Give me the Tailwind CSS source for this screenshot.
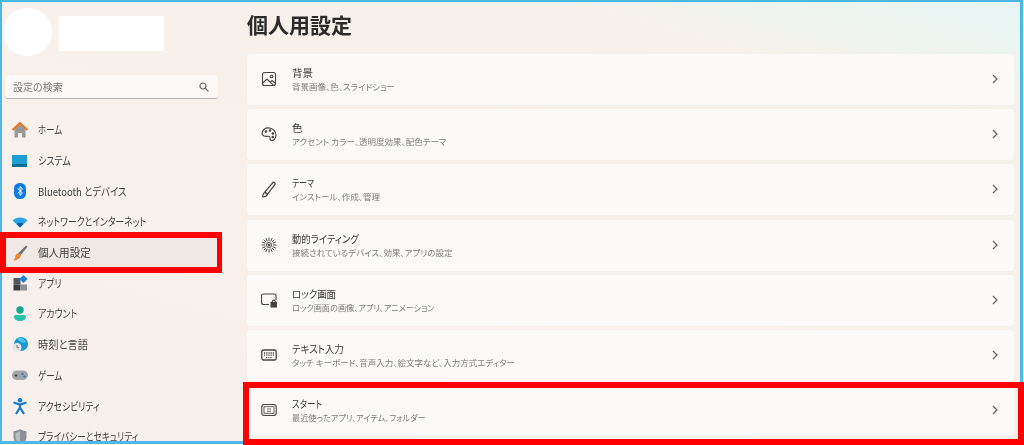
<!DOCTYPE html>
<html lang="ja">
<head>
    <meta charset="UTF-8">
    <title>個人用設定</title>
    <script src="https://cdn.jsdelivr.net/npm/@tailwindcss/browser@4"></script>
</head>
<body class="bg-white">
<div class="relative w-[1024px] h-[445px] overflow-hidden bg-white font-['Noto_Sans_CJK_JP','Noto_Sans',sans-serif] [font-feature-settings:'palt']">
    <!-- window -->
    <div class="flex w-[1023px] h-[444px] overflow-hidden border-[3px] border-t-2 border-l-2 border-[#4db8e8] bg-linear-[195deg] from-[#e5f7f5] via-[#f7f1eb] via-[18%] to-[#f8f0ed] text-[#333]">

        <!-- sidebar -->
        <aside class="w-[245px] shrink-0 pl-[3px] blur-[0.45px]">
            <div class="flex items-center gap-[7px] pt-[6px]">
                <div class="w-[49px] h-[48px] -ml-[2px] rounded-full bg-white"></div>
                <div class="w-[105px] h-[35px] mt-[2px] bg-white"></div>
            </div>
            <div class="flex items-center justify-between w-[213px] h-[24px] mt-[19px] pl-[8px] pr-[9px] rounded-[3px] bg-[#fbf8f6] border-b border-[#b5b2b0] shadow-[0_0_1px_#ddd] text-[10px] text-[#777]">
                <span>設定の検索</span>
                <svg class="w-[10px] h-[10px]" viewBox="0 0 10 10" fill="none" stroke="#666" stroke-width="1.2"><circle cx="4" cy="4" r="3"/><path d="M6.2 6.2 9.4 9.4"/></svg>
            </div>

            <nav class="mt-[15.5px] text-[11px] leading-none text-[#3d3d3d]">
                <div class="flex items-center h-[30.7px] pl-[6px] gap-[9px]">
                    <svg class="w-[18px] h-[18px] shrink-0" viewBox="0 0 18 18"><path d="M3.5 8 9 3l5.500 5v8.500h-3.500v-4.500H7v4.500H3.500z" fill="#9c9a98"/><path d="M1.500 9 9 2l7.500 7" fill="none" stroke="#e8741c" stroke-width="2"/></svg>
                    <span class="origin-left scale-x-[0.77]">ホーム</span>
                </div>
                <div class="flex items-center h-[30.7px] pl-[6px] gap-[9px]">
                    <svg class="w-[18px] h-[18px] shrink-0" viewBox="0 0 18 18"><rect x="1" y="3" width="15" height="10" fill="#1f9ed1"/><rect x="1" y="12" width="15" height="3" fill="#0f6c96"/></svg>
                    <span class="origin-left scale-x-[0.82]">システム</span>
                </div>
                <div class="flex items-center h-[30.7px] pl-[6px] gap-[9px]">
                    <svg class="w-[18px] h-[18px] shrink-0" viewBox="0 0 18 18"><rect x="3" y="1" width="12" height="16" rx="5.500" fill="#0c7be6"/><path d="M6.500 6.300 11.500 11 9 13.400V4.600L11.500 7 6.500 11.700" fill="none" stroke="#fff" stroke-width="1"/></svg>
                    <span class="origin-left scale-x-[0.86]">Bluetooth とデバイス</span>
                </div>
                <div class="flex items-center h-[30.7px] pl-[6px] gap-[9px]">
                    <svg class="w-[18px] h-[18px] shrink-0" viewBox="0 0 18 18"><path d="M1.500 7.500C5.500 3.500 12.500 3.500 16.500 7.500L9 14.500z" fill="#2ba3e6"/><path d="M5.500 11C7.500 9.200 10.500 9.200 12.500 11L9 14.500z" fill="#0e5f9e"/></svg>
                    <span class="origin-left scale-x-[0.8]">ネットワークとインターネット</span>
                </div>
                <div class="flex items-center h-[30.7px] pl-[6px] gap-[9px] w-[213px] rounded-[3px] bg-[#efe8e5]">
                    <svg class="w-[18px] h-[18px] shrink-0" viewBox="0 0 18 18"><path d="M7 9.500 15 1.500l1.500 1.200-7.500 9.300z" fill="#6f6f72"/><path d="M6.500 9.500c2-.3 3.500 1 3 3C8.800 14.700 5.500 16.500 2.500 16.500c1.500-1.500 1.500-3 1.800-4.200.2-1.100 1.200-2.500 2.200-2.800z" fill="#ef8a2b"/></svg>
                    <span class="origin-left scale-x-[0.96]">個人用設定</span>
                </div>
                <div class="flex items-center h-[30.7px] pl-[6px] gap-[9px]">
                    <svg class="w-[18px] h-[18px] shrink-0" viewBox="0 0 18 18"><rect x="2.500" y="4" width="7" height="6.500" fill="#55585c"/><rect x="2.500" y="10.500" width="7" height="6" fill="#3b3e42"/><rect x="9.500" y="10.500" width="6.500" height="6" fill="#8e9094"/><path d="M12.500 1 16.500 5 12.500 9 8.500 5z" fill="#1583d8"/></svg>
                    <span class="origin-left scale-x-[0.8]">アプリ</span>
                </div>
                <div class="flex items-center h-[30.7px] pl-[6px] gap-[9px]">
                    <svg class="w-[18px] h-[18px] shrink-0" viewBox="0 0 18 18"><circle cx="9" cy="5" r="3.700" fill="#18a892"/><path d="M3 11.500c0-1 1-1.500 2-1.500h8c1 0 2 .500 2 1.500 0 3-2.500 4.500-6 4.500s-6-1.500-6-4.500z" fill="#27c2a8"/></svg>
                    <span class="origin-left scale-x-[0.81]">アカウント</span>
                </div>
                <div class="flex items-center h-[30.7px] pl-[6px] gap-[9px]">
                    <svg class="w-[18px] h-[18px] shrink-0" viewBox="0 0 18 18"><circle cx="10" cy="8" r="7" fill="#1b97d4"/><path d="M6 2.500c4-1.500 8 .500 9 4-3 .500-6-.500-9-4z" fill="#50c8e8"/><circle cx="6" cy="11.500" r="4.500" fill="#e4e4e6"/><path d="M6 9v2.700h2" fill="none" stroke="#555" stroke-width=".8"/></svg>
                    <span class="origin-left scale-x-[0.93]">時刻と言語</span>
                </div>
                <div class="flex items-center h-[30.7px] pl-[6px] gap-[9px]">
                    <svg class="w-[18px] h-[18px] shrink-0" viewBox="0 0 18 18"><rect x="1" y="4.500" width="16" height="9.500" rx="4.700" fill="#a3a5a9"/><path d="M3.500 9.500h3M5 8v3" stroke="#444" stroke-width=".9"/><circle cx="11.500" cy="8" r="1.100" fill="#1a6fc4"/><circle cx="13.500" cy="10.500" r="1.100" fill="#1a6fc4"/></svg>
                    <span class="origin-left scale-x-[0.77]">ゲーム</span>
                </div>
                <div class="flex items-center h-[30.7px] pl-[6px] gap-[9px]">
                    <svg class="w-[18px] h-[18px] shrink-0" viewBox="0 0 18 18"><circle cx="9" cy="3.200" r="2.200" fill="#1278d0"/><path d="M2.500 5.500 9 7.500l6.500-2M9 7.500v3.500M9 10.500 5 17M9 10.500 13 17" fill="none" stroke="#1278d0" stroke-width="2.200"/></svg>
                    <span class="origin-left scale-x-[0.8]">アクセシビリティ</span>
                </div>
                <div class="flex items-center h-[30.7px] pl-[6px] gap-[9px]">
                    <svg class="w-[18px] h-[18px] shrink-0" viewBox="0 0 18 18"><path d="M9 1c2 1.500 4 2 6.500 2.200V9c0 4-3 6.500-6.500 8C5.500 15.500 2.500 13 2.500 9V3.200C5 3 7 2.500 9 1z" fill="#8b9096"/><path d="M9 3v12C6 13.700 4.500 11.500 4.500 9V4.800C6.200 4.600 7.700 4 9 3z" fill="#b9bdc2"/></svg>
                    <span class="origin-left scale-x-[0.79]">プライバシーとセキュリティ</span>
                </div>
            </nav>
        </aside>

        <!-- content -->
        <main class="flex-1 min-w-0">
            <h1 class="h-[52px] pt-[5px] text-[21px] leading-[34px] font-semibold text-[#2b2b2b] blur-[0.4px]">個人用設定</h1>
            <div class="flex flex-col gap-[4.200px] w-[767px]">
                <div class="flex items-center h-[51px] pb-[1px] rounded-[3px] bg-[#fcfaf8] shadow-[0_0_1px_#eee3dc]">
                    <div class="w-[45px] flex justify-center pr-[2px] blur-[0.4px]">
                        <svg class="w-[16px] h-[16px]" viewBox="0 0 16 16" fill="none" stroke="#444" stroke-width="1.100"><rect x="1.500" y="1.500" width="13" height="13" rx="2"/><circle cx="10.500" cy="5.500" r="1.300"/><path d="M1.800 12 6 8l6.500 6.300M9.500 10.800 11 9.500l3 2.500"/></svg>
                    </div>
                    <div class="flex-1 blur-[0.45px]">
                        <div class="text-[10.500px] leading-[14px] text-[#3a3a3a]">背景</div>
                        <div class="text-[8.500px] leading-[12px] text-[#7d7d7d]">背景画像、色、スライドショー</div>
                    </div>
                    <svg class="w-[6px] h-[10px] mr-[16px]" viewBox="0 0 6 10" fill="none" stroke="#666" stroke-width="1.300"><path d="M1 1l4 4-4 4"/></svg>
                </div>
                <div class="flex items-center h-[51px] pb-[1px] rounded-[3px] bg-[#fcfaf8] shadow-[0_0_1px_#eee3dc]">
                    <div class="w-[45px] flex justify-center pr-[2px] blur-[0.4px]">
                        <svg class="w-[16px] h-[16px]" viewBox="0 0 16 16" fill="none" stroke="#444" stroke-width="1.100"><path d="M1 7c1-3.500 4-5.500 7.500-5 3.500.500 6.500 3.500 6.500 7 0 3-2 5.500-4 5.500-1.500 0-2-1-2-2.300 0-1.700-1-2.200-2.500-1.900C4 10.700 .500 9.500 1 7z"/><circle cx="5" cy="5.500" r=".8" fill="#444"/><circle cx="9" cy="4.500" r=".8" fill="#444"/><circle cx="12" cy="7.500" r=".8" fill="#444"/><circle cx="11.800" cy="11" r=".8" fill="#444"/></svg>
                    </div>
                    <div class="flex-1 blur-[0.45px]">
                        <div class="text-[10.500px] leading-[14px] text-[#3a3a3a]">色</div>
                        <div class="text-[8.500px] leading-[12px] text-[#7d7d7d]">アクセント カラー、透明度効果、配色テーマ</div>
                    </div>
                    <svg class="w-[6px] h-[10px] mr-[16px]" viewBox="0 0 6 10" fill="none" stroke="#666" stroke-width="1.300"><path d="M1 1l4 4-4 4"/></svg>
                </div>
                <div class="flex items-center h-[51px] pb-[1px] rounded-[3px] bg-[#fcfaf8] shadow-[0_0_1px_#eee3dc]">
                    <div class="w-[45px] flex justify-center pr-[2px] blur-[0.4px]">
                        <svg class="w-[17px] h-[17px]" viewBox="0 0 16 16" fill="none" stroke="#444" stroke-width="1.100"><path d="M12.500 1c1 0 2 1 1.800 2L7 12.500 4.500 10.500z"/><path d="M4.500 10.500 7 12.500c-.5 1.500-2 2.500-3.800 2.500-.6 0-.9-.4-.7-1 .5-1.500 1-3 2-3.500z"/></svg>
                    </div>
                    <div class="flex-1 blur-[0.45px]">
                        <div class="text-[10.500px] leading-[14px] text-[#3a3a3a] origin-left scale-x-[0.75]">テーマ</div>
                        <div class="text-[8.500px] leading-[12px] text-[#7d7d7d]">インストール、作成、管理</div>
                    </div>
                    <svg class="w-[6px] h-[10px] mr-[16px]" viewBox="0 0 6 10" fill="none" stroke="#666" stroke-width="1.300"><path d="M1 1l4 4-4 4"/></svg>
                </div>
                <div class="flex items-center h-[51px] pb-[1px] rounded-[3px] bg-[#fcfaf8] shadow-[0_0_1px_#eee3dc]">
                    <div class="w-[45px] flex justify-center pr-[2px] blur-[0.4px]">
                        <svg class="w-[16px] h-[16px]" viewBox="0 0 16 16" fill="none" stroke="#444" stroke-width="1"><circle cx="8" cy="8" r="2.500"/><circle cx="8" cy="8" r=".9" fill="#444"/><path d="M8 .5v3.500M8 12v3.500M.5 8H4M12 8h3.500M2.700 2.700 5.200 5.200M10.800 10.800l2.500 2.500M13.300 2.700 10.800 5.200M5.200 10.800 2.700 13.300M4.800 1.100l1.500 3.300M9.700 11.600l1.500 3.300M11.200 1.100 9.700 4.400M6.300 11.600l-1.500 3.300M1.100 4.800l3.300 1.500M11.600 9.700l3.300 1.500M14.900 4.800l-3.300 1.500M4.400 9.700l-3.300 1.500"/></svg>
                    </div>
                    <div class="flex-1 blur-[0.45px]">
                        <div class="text-[10.500px] leading-[14px] text-[#3a3a3a] origin-left scale-x-[0.89]">動的ライティング</div>
                        <div class="text-[8.500px] leading-[12px] text-[#7d7d7d]">接続されているデバイス、効果、アプリの設定</div>
                    </div>
                    <svg class="w-[6px] h-[10px] mr-[16px]" viewBox="0 0 6 10" fill="none" stroke="#666" stroke-width="1.300"><path d="M1 1l4 4-4 4"/></svg>
                </div>
                <div class="flex items-center h-[51px] pb-[1px] rounded-[3px] bg-[#fcfaf8] shadow-[0_0_1px_#eee3dc]">
                    <div class="w-[45px] flex justify-center pr-[2px] blur-[0.4px]">
                        <svg class="w-[16px] h-[16px]" viewBox="0 0 16 16" fill="none" stroke="#444" stroke-width="1.100"><path d="M8 12.500H2.500C1.500 12.500 .5 11.500 .5 10.500V4C.5 3 1.500 2 2.500 2H13c1 0 2 1 2 2v4"/><rect x="10" y="10.500" width="5.500" height="4.500" fill="#444"/><path d="M11.300 10.500V9.500c0-1.800 3-1.800 3 0v1"/></svg>
                    </div>
                    <div class="flex-1 blur-[0.45px]">
                        <div class="text-[10.500px] leading-[14px] text-[#3a3a3a] origin-left scale-x-[0.9]">ロック画面</div>
                        <div class="text-[8.500px] leading-[12px] text-[#7d7d7d] origin-left scale-x-[0.96]">ロック画面の画像、アプリ、アニメーション</div>
                    </div>
                    <svg class="w-[6px] h-[10px] mr-[16px]" viewBox="0 0 6 10" fill="none" stroke="#666" stroke-width="1.300"><path d="M1 1l4 4-4 4"/></svg>
                </div>
                <div class="flex items-center h-[51px] pb-[1px] rounded-[3px] bg-[#fcfaf8] shadow-[0_0_1px_#eee3dc]">
                    <div class="w-[45px] flex justify-center pr-[2px] blur-[0.4px]">
                        <svg class="w-[16px] h-[16px]" viewBox="0 0 16 16" fill="none" stroke="#444" stroke-width="1.300"><rect x=".8" y="3" width="14.400" height="10" rx="1.500"/><path d="M3 6h10M3 8.200h10M5 10.700h6" stroke-dasharray="1 .8"/></svg>
                    </div>
                    <div class="flex-1 blur-[0.45px]">
                        <div class="text-[10.500px] leading-[14px] text-[#3a3a3a] origin-left scale-x-[0.9]">テキスト入力</div>
                        <div class="text-[8.500px] leading-[12px] text-[#7d7d7d]">タッチ キーボード、音声入力、絵文字など、入力方式エディター</div>
                    </div>
                    <svg class="w-[6px] h-[10px] mr-[16px]" viewBox="0 0 6 10" fill="none" stroke="#666" stroke-width="1.300"><path d="M1 1l4 4-4 4"/></svg>
                </div>
                <div class="flex items-center h-[51px] pb-[1px] rounded-[3px] bg-[#fcfaf8] shadow-[0_0_1px_#eee3dc]">
                    <div class="w-[45px] flex justify-center pr-[2px] blur-[0.4px]">
                        <svg class="w-[16px] h-[16px]" viewBox="0 0 16 16" fill="none" stroke="#444" stroke-width="1.100"><rect x=".8" y="2.500" width="14.400" height="11" rx="2.500"/><rect x="3" y="4.700" width="10" height="6.600" stroke-width=".8"/><path d="M6 7h4M6 9.300h4" stroke-width=".8"/></svg>
                    </div>
                    <div class="flex-1 blur-[0.45px]">
                        <div class="text-[10.500px] leading-[14px] text-[#3a3a3a] origin-left scale-x-[0.81]">スタート</div>
                        <div class="text-[8.500px] leading-[12px] text-[#7d7d7d] origin-left scale-x-[0.96]">最近使ったアプリ、アイテム、フォルダー</div>
                    </div>
                    <svg class="w-[6px] h-[10px] mr-[16px]" viewBox="0 0 6 10" fill="none" stroke="#666" stroke-width="1.300"><path d="M1 1l4 4-4 4"/></svg>
                </div>
            </div>
        </main>
    </div>

    <!-- red highlight boxes drawn over the screenshot -->
    <div class="absolute left-0 top-[232px] w-[222px] h-[41px] border-[6px] border-r-[5px] border-[#ff0000]"></div>
    <div class="absolute left-[243px] top-[382px] w-[781px] h-[63px] border-[6px] border-[#ff0000]"></div>
</div>
</body>
</html>
